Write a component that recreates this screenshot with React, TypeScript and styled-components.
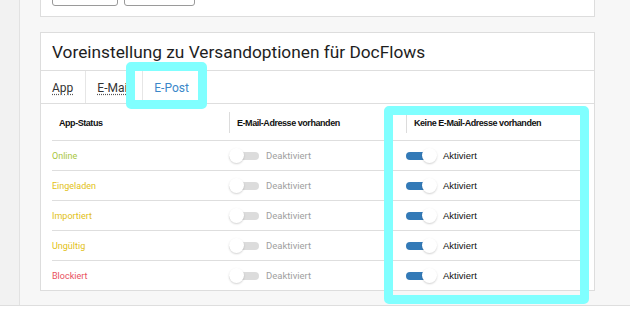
import React from "react";
import styled, { createGlobalStyle } from "styled-components";

const GlobalStyle = createGlobalStyle`
  html, body {
    margin: 0;
    padding: 0;
    background: #ffffff;
  }
  body {
    font-family: "Roboto", "Liberation Sans", sans-serif;
    color: #222;
  }
`;

const Page = styled.div`
  display: flex;
  height: 305px;
  border-bottom: 1px solid #dedede;
  overflow: hidden;
`;

const Rail = styled.aside`
  width: 19px;
  flex-shrink: 0;
  background: #f2f2f2;
  border-right: 1px solid #e2e2e2;
`;

const Content = styled.main`
  flex: 1;
  background: #f7f7f7;
  padding: 0 37px 0 20px;
  display: flex;
  flex-direction: column;
  gap: 15px;
`;

const Card = styled.section`
  position: relative;
  background: #fff;
  border: 1px solid #dddddd;
`;

const TopCard = styled(Card)`
  border-top: none;
  height: 16px;
  padding: 0 11px;
  display: flex;
  gap: 6px;
`;

const GhostButton = styled.button<{ $w: number }>`
  width: ${(p) => p.$w}px;
  height: 20px;
  margin-top: -14px;
  background: #fff;
  border: 1px solid #9a9a9a;
  border-radius: 3px;
`;

const Title = styled.h2`
  margin: 0;
  height: 37px;
  padding: 0 11px;
  display: flex;
  align-items: center;
  font-size: 17.3px;
  font-weight: 400;
  color: #1e1e1e;
  border-bottom: 1px solid #dedede;
`;

const Tabs = styled.nav`
  display: flex;
  height: 32px;
  border-bottom: 1px solid #dedede;
`;

const Tab = styled.div<{ $active?: boolean }>`
  display: flex;
  align-items: center;
  padding: 2px 12px 0 11px;
  font-size: 12px;
  border-right: 1px solid #e6e6e6;
  color: ${(p) => (p.$active ? "#3b87c9" : "#333")};
  &:last-child {
    border-right: none;
  }
  span {
    text-decoration: ${(p) => (p.$active ? "none" : "underline dotted #555")};
    text-underline-offset: 2px;
  }
`;

const Table = styled.div`
  margin: 0 11px;
`;

const Row = styled.div<{ $head?: boolean }>`
  display: grid;
  grid-template-columns: 177px 177px 177px;
  height: ${(p) => (p.$head ? 36 : 29)}px;
  border-bottom: 1px solid #dedede;
  &:last-child {
    border-bottom: none;
  }
`;

const HeadCell = styled.div<{ $divider?: boolean }>`
  display: flex;
  align-items: center;
  padding-left: 7px;
  padding-top: 1px;
  font-family: "Liberation Sans", sans-serif;
  font-weight: 700;
  font-size: 9px;
  letter-spacing: -0.45px;
  color: #111;
  border-left: ${(p) => (p.$divider ? "1px solid #dcdcdc" : "none")};
  margin: ${(p) => (p.$divider ? "8px 0 7px" : "0")};
`;

const Cell = styled.div`
  display: flex;
  align-items: center;
  gap: 7px;
`;

const Status = styled.span<{ $color: string }>`
  font-size: 9px;
  color: ${(p) => p.$color};
`;

const ToggleTrack = styled.span<{ $on: boolean }>`
  position: relative;
  width: 30px;
  height: 8px;
  border-radius: 4px;
  background: ${(p) => (p.$on ? "#337ab7" : "#dcdcdc")};
`;

const Knob = styled.span<{ $on: boolean }>`
  position: absolute;
  top: -4px;
  ${(p) => (p.$on ? "right: -1px;" : "left: 0;")}
  width: 15px;
  height: 15px;
  border-radius: 50%;
  background: #fff;
  box-shadow: 0 1px 2px rgba(0, 0, 0, 0.18);
`;

const ToggleLabel = styled.span<{ $on: boolean }>`
  font-family: ${(p) =>
    p.$on ? '"Liberation Sans", sans-serif' : '"Roboto", sans-serif'};
  font-size: 9.5px;
  color: ${(p) => (p.$on ? "#111" : "#a0a0a0")};
`;

const Highlight = styled.div`
  position: absolute;
  border: 9px solid #80ffff;
  border-radius: 5px;
  pointer-events: none;
`;

const Toggle = ({ on }: { on: boolean }) => (
  <Cell>
    <ToggleTrack $on={on}>
      <Knob $on={on} />
    </ToggleTrack>
    <ToggleLabel $on={on}>{on ? "Aktiviert" : "Deaktiviert"}</ToggleLabel>
  </Cell>
);

const statuses = [
  { label: "Online", color: "#a8c63c" },
  { label: "Eingeladen", color: "#e2bf16" },
  { label: "Importiert", color: "#e2bf16" },
  { label: "Ungültig", color: "#e2bf16" },
  { label: "Blockiert", color: "#e9505d" },
];

const App = () => (
  <>
    <GlobalStyle />
    <Page>
      <Rail />
      <Content>
        <TopCard>
          <GhostButton $w={66} />
          <GhostButton $w={71} />
        </TopCard>
        <Card>
          <Title>Voreinstellung zu Versandoptionen für DocFlows</Title>
          <Tabs>
            <Tab>
              <span>App</span>
            </Tab>
            <Tab>
              <span>E-Mail</span>
            </Tab>
            <Tab $active>
              <span>E-Post</span>
            </Tab>
          </Tabs>
          <Table>
            <Row $head>
              <HeadCell>App-Status</HeadCell>
              <HeadCell $divider>E-Mail-Adresse vorhanden</HeadCell>
              <HeadCell $divider>Keine E-Mail-Adresse vorhanden</HeadCell>
            </Row>
            {statuses.map((s) => (
              <Row key={s.label}>
                <Cell>
                  <Status $color={s.color}>{s.label}</Status>
                </Cell>
                <Toggle on={false} />
                <Toggle on />
              </Row>
            ))}
          </Table>
          <Highlight style={{ left: 85, top: 29, width: 63, height: 29 }} />
          <Highlight style={{ left: 343, top: 73, width: 187, height: 180 }} />
        </Card>
      </Content>
    </Page>
  </>
);

export default App;
